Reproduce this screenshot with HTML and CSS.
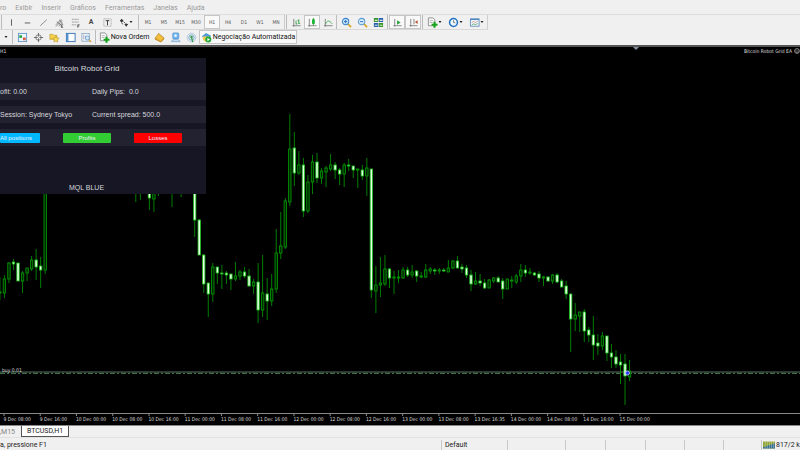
FILE: index.html
```html
<!DOCTYPE html>
<html lang="pt">
<head>
    <meta charset="utf-8">
    <title>BTCUSD,H1</title>
    <link rel="stylesheet" href="styles.css">
</head>
<body>
    <svg class="sprite" aria-hidden="true">
        <symbol id="i-vline" viewBox="0 0 12 12"><path d="M6 2.5v7" stroke="#555"/></symbol>
        <symbol id="i-hline" viewBox="0 0 12 12"><path d="M3 6.5h6" stroke="#555"/></symbol>
        <symbol id="i-trend" viewBox="0 0 12 12"><path d="M2.5 9.5l7-6.500" stroke="#666" stroke-width=".8"/></symbol>
        <symbol id="i-channel" viewBox="0 0 12 12"><path d="M2 8.500l6-6M2 10.500l7-7M5 10l4-4M3 5l5 4M5.500 3l4 4" stroke="#555" stroke-width=".7"/><path d="M8 8.500h2M8 10h1.500M8 11.300h2M8 8.500v3" stroke="#333" stroke-width=".7"/></symbol>
        <symbol id="i-fibo" viewBox="0 0 12 12"><path d="M2 2.500h8M2 5.500h8M2 8.500h5" stroke="#777" stroke-width=".8" stroke-dasharray="1.200 .4"/><path d="M8.500 11.500v-3h2M8.500 10h1.500" stroke="#333" stroke-width=".8"/></symbol>
        <symbol id="i-label" viewBox="0 0 12 12"><rect x="2" y="2" width="8" height="8" stroke="#888" stroke-width=".7" stroke-dasharray="1 .6"/><path d="M4 4h4M6 4v5" stroke="#333"/></symbol>
        <symbol id="i-arrows" viewBox="0 0 12 12"><path d="M2 4l2-2 2 2-2 2zM7 8l2-1 2 1-2 2.500z" fill="#333"/><path d="M4 6l1 2M6 5l2 2" stroke="#444"/></symbol>
        <symbol id="i-bars" viewBox="0 0 12 12"><path d="M3 2v8.500M1.500 9.500h9" stroke="#666" stroke-width=".8"/><path d="M5.500 4v4M8.500 2.500v5M7 4h1.500M8.500 7h1.500M5.500 7.500h1.500" stroke="#2a9a3e" stroke-width=".9"/></symbol>
        <symbol id="i-candles" viewBox="0 0 12 12"><path d="M2.500 2v8.500M1 9.500h9.500" stroke="#666" stroke-width=".8"/><path d="M7 1v8" stroke="#177b27" stroke-width=".8"/><rect x="5.500" y="2.500" width="3" height="5" fill="#19b52e"/></symbol>
        <symbol id="i-line" viewBox="0 0 12 12"><path d="M2.500 2v8.500M1 9.500h9.500" stroke="#666" stroke-width=".8"/><path d="M2.500 8C5 3 6.500 3.500 10 7.500" stroke="#35a548" stroke-width=".9"/></symbol>
        <symbol id="i-zoomin" viewBox="0 0 12 12"><path d="M7.500 7.500l3.500 3.500" stroke="#d9a92c" stroke-width="2"/><circle cx="5" cy="5" r="3.500" fill="#bfe0fa" stroke="#3d83c9" stroke-width="1.100"/><path d="M3.300 5h3.400M5 3.300v3.400" stroke="#1e66b5" stroke-width=".9"/></symbol>
        <symbol id="i-zoomout" viewBox="0 0 12 12"><path d="M7.500 7.500l3.500 3.500" stroke="#d9a92c" stroke-width="2"/><circle cx="5" cy="5" r="3.500" fill="#d3ebfb" stroke="#5c9bd3" stroke-width="1.100"/><path d="M3.300 5h3.400" stroke="#1e66b5" stroke-width=".9"/></symbol>
        <symbol id="i-tile" viewBox="0 0 12 12"><path d="M1 1h4.700v4.500H1zM6.300 6.500H11V11H6.300z" fill="#37922c"/><path d="M6.300 1H11v4.500H6.300zM1 6.500h4.700V11H1z" fill="#2c5eb8"/><path d="M2 3.700h3M7.300 3.700h3M2 9h3M7.300 9h3" stroke="#dff1c8" stroke-width="1.300"/></symbol>
        <symbol id="i-scroll" viewBox="0 0 12 12"><path d="M3 2v8.500M1.500 9.500h9" stroke="#666" stroke-width=".8"/><path d="M5.500 3.500l4 2.500-4 2.500z" fill="#28a63b"/></symbol>
        <symbol id="i-shift" viewBox="0 0 12 12"><path d="M3 2v8.500M1.500 9.500h9M6.500 2v6" stroke="#666" stroke-width=".8"/><path d="M10.500 3.500v4l-3-2z" fill="#c04f35"/></symbol>
        <symbol id="i-add" viewBox="0 0 12 12"><path d="M1.500 1h5l2 2v6.500h-7z" fill="#f7f7f7" stroke="#777" stroke-width=".8"/><path d="M3 4h3.500M3 6h3" stroke="#999" stroke-width=".7"/><path d="M8.200 5.200v6.400M5 8.400h6.500" stroke="#18a41d" stroke-width="2.300"/></symbol>
        <symbol id="i-clock" viewBox="0 0 12 12"><circle cx="6" cy="6" r="4.300" fill="#eef6ff" stroke="#2674c0" stroke-width="1.700"/><path d="M6 3.500V6l2 .500" stroke="#555" stroke-width=".8"/></symbol>
        <symbol id="i-template" viewBox="0 0 12 12"><rect x="1.500" y="2" width="9.500" height="8" fill="#f4faff" stroke="#5483b0" stroke-width=".9"/><path d="M1.500 2.700h9.500" stroke="#4c88c4" stroke-width="1.300"/><path d="M3 6l2-1 2 1 2.500-1.500" stroke="#c66" stroke-width=".7"/><path d="M3 8.500l2-1 2 .700 2.500-1" stroke="#3a9b50" stroke-width=".8"/></symbol>
        <symbol id="i-market" viewBox="0 0 12 12"><rect x="1.500" y="1.500" width="9" height="9" fill="#eef6fd" stroke="#5590c5" stroke-width=".9"/><path d="M2.500 3.500h3v3h-3z" fill="#2eaa42"/><path d="M6.500 6h3v3h-3z" fill="#dc5940"/></symbol>
        <symbol id="i-target" viewBox="0 0 12 12"><circle cx="6" cy="6" r="3" stroke="#777" stroke-width="1"/><path d="M6 1v4M6 7v4M1 6h4M7 6h4" stroke="#666"/></symbol>
        <symbol id="i-folder" viewBox="0 0 12 12"><path d="M1 2.500h3l1 1h3.500V8H1z" fill="#f6d44e" stroke="#b89122" stroke-width=".7"/><path d="M7.500 4.500l1 2 2.700.300-2 1.700.500 2.500-2.200-1.200L5.300 11l.500-2.500-2-1.700 2.700-.300z" fill="#fbdc50" stroke="#b58a1c" stroke-width=".6"/></symbol>
        <symbol id="i-terminal" viewBox="0 0 12 12"><rect x="1.500" y="1.500" width="9.500" height="9" fill="#fbfdff" stroke="#3472b5"/><path d="M3 2v8" stroke="#4c8bd0" stroke-width="1.500"/></symbol>
        <symbol id="i-tester" viewBox="0 0 12 12"><rect x="1" y="1.500" width="8" height="8.500" fill="#f2f6fa" stroke="#7d9cba" stroke-width=".8"/><path d="M3 3v5M5 4v4" stroke="#88a" stroke-width=".7"/><circle cx="7" cy="6.500" r="2.200" fill="#d7ebf8" stroke="#5a93c5" stroke-width=".8"/><path d="M8.700 8.500l2.500 2.500" stroke="#d0a132" stroke-width="1.400"/></symbol>
        <symbol id="i-book" viewBox="0 0 12 12"><path d="M1 7l4-5.500L11 6.500 7.500 10.500z" fill="#f2bd38" stroke="#ad7714" stroke-width=".7"/><path d="M1 7l6.500 3.500L11 6.500v1.500l-3.500 3.500L1 8.300z" fill="#c98a1d"/></symbol>
        <symbol id="i-user" viewBox="0 0 12 12"><rect x="3" y="1" width="6.500" height="6.500" rx="1" fill="#74b7ee" stroke="#3f86c8" stroke-width=".7"/><circle cx="6" cy="4" r="1.500" fill="#e5f4ff"/><path d="M1.500 10.500c0-3 9.500-3 9.500 0z" fill="#cbe0f1" stroke="#6b9cc8" stroke-width=".7"/></symbol>
        <symbol id="i-signal" viewBox="0 0 12 12"><circle cx="6" cy="6" r="4.700" stroke="#a4c4dd" stroke-width=".9"/><circle cx="6" cy="6" r="2.900" stroke="#6ea9cc" stroke-width="1"/><circle cx="6" cy="5.500" r="1.400" fill="#3c9b55"/><path d="M6 6l1.500 5" stroke="#3c9b55" stroke-width="1.400"/></symbol>
        <symbol id="i-auto" viewBox="0 0 12 12"><path d="M1 4.500L5.500 1 11 4l-1 2H2z" fill="#4f9bd5"/><path d="M2 5h7v3.500L5 11 2 8.500z" fill="#f0cd55"/><circle cx="8" cy="8.200" r="3.300" fill="#21a936"/><path d="M7 6.500l2.800 1.700L7 10z" fill="#fff"/></symbol>
        <symbol id="i-smile" viewBox="0 0 8 8"><circle cx="4" cy="4" r="3.200" stroke="#ddd" stroke-width=".8"/><path d="M2.300 4.600c.700 1.600 2.700 1.600 3.400 0M2.800 2.500v1M5.200 2.500v1" stroke="#ddd" stroke-width=".8"/></symbol>
        <symbol id="i-caret" viewBox="0 0 4 4"><path d="M.500 1h3L2 3z" fill="#222"/></symbol>
        <symbol id="i-net" viewBox="0 0 14 8"><rect width="14" height="8" fill="#8fa534"/><path d="M0 8V6.500L14 2v6z" fill="#356f95"/><path d="M2.500 0v8M5 0v8M7.500 0v8M10 0v8M12.500 0v8" stroke="#dfe6cc" stroke-width=".5"/></symbol>
    </svg>

    <nav class="menu">
        <button>ro</button>
        <button>Exibir</button>
        <button>Inserir</button>
        <button>Gráficos</button>
        <button>Ferramentas</button>
        <button>Janelas</button>
        <button>Ajuda</button>
    </nav>

    <div class="toolbar">
        <div class="group">
            <button aria-label="Linha vertical"><svg><use href="#i-vline"/></svg></button>
            <button aria-label="Linha horizontal"><svg><use href="#i-hline"/></svg></button>
            <button aria-label="Linha de tendência"><svg><use href="#i-trend"/></svg></button>
            <button aria-label="Canal"><svg><use href="#i-channel"/></svg></button>
            <button aria-label="Fibonacci"><svg><use href="#i-fibo"/></svg></button>
            <button class="letter">A</button>
            <button aria-label="Etiqueta"><svg><use href="#i-label"/></svg></button>
            <button class="drop" aria-label="Setas"><svg><use href="#i-arrows"/></svg><svg class="caret"><use href="#i-caret"/></svg></button>
        </div>
        <div class="group periods">
            <button>M1</button>
            <button>M5</button>
            <button>M15</button>
            <button>M30</button>
            <button class="pressed">H1</button>
            <button>H4</button>
            <button>D1</button>
            <button>W1</button>
            <button>MN</button>
        </div>
        <div class="group">
            <button aria-label="Barras"><svg><use href="#i-bars"/></svg></button>
            <button class="pressed" aria-label="Candles"><svg><use href="#i-candles"/></svg></button>
            <button aria-label="Linha"><svg><use href="#i-line"/></svg></button>
        </div>
        <div class="group thin">
            <button aria-label="Aproximar"><svg><use href="#i-zoomin"/></svg></button>
            <button aria-label="Afastar"><svg><use href="#i-zoomout"/></svg></button>
            <button aria-label="Organizar janelas"><svg><use href="#i-tile"/></svg></button>
        </div>
        <div class="group">
            <button class="pressed" aria-label="Rolagem automática"><svg><use href="#i-scroll"/></svg></button>
            <button class="pressed" aria-label="Deslocar gráfico"><svg><use href="#i-shift"/></svg></button>
        </div>
        <div class="group">
            <button class="drop" aria-label="Indicadores"><svg><use href="#i-add"/></svg><svg class="caret"><use href="#i-caret"/></svg></button>
            <button class="drop" aria-label="Períodos"><svg><use href="#i-clock"/></svg><svg class="caret"><use href="#i-caret"/></svg></button>
            <button class="drop" aria-label="Modelos"><svg><use href="#i-template"/></svg><svg class="caret"><use href="#i-caret"/></svg></button>
        </div>
    </div>

    <div class="toolbar standard">
        <button class="cut" aria-label="Perfis"><svg class="caret"><use href="#i-caret"/></svg></button>
        <div class="group">
            <button aria-label="Observação do mercado"><svg><use href="#i-market"/></svg></button>
            <button aria-label="Janela de dados"><svg><use href="#i-target"/></svg></button>
            <button aria-label="Navegador"><svg><use href="#i-folder"/></svg></button>
            <button aria-label="Terminal"><svg><use href="#i-terminal"/></svg></button>
            <button aria-label="Testador"><svg><use href="#i-tester"/></svg></button>
        </div>
        <div class="group">
            <button class="wide order"><svg><use href="#i-add"/></svg>Nova Ordem</button>
            <button aria-label="MetaEditor"><svg><use href="#i-book"/></svg></button>
            <button aria-label="Comunidade"><svg><use href="#i-user"/></svg></button>
            <button aria-label="Sinais"><svg><use href="#i-signal"/></svg></button>
            <button class="wide auto pressed"><svg><use href="#i-auto"/></svg>Negociação Automatizada</button>
        </div>
    </div>

    <main class="chart">
        <svg id="candles" class="candles"></svg>
        <span class="symbol">H1</span>
        <span class="ea">Bitcoin Robot Grid EA <svg><use href="#i-smile"/></svg></span>
        <span class="order-label">buy 0.01</span>
        <section class="panel">
            <h1>Bitcoin Robot Grid</h1>
            <div class="row"><span>ofit: 0.00</span><span>Daily Pips:&nbsp; 0.0</span></div>
            <div class="row"><span>Session: Sydney Tokyo</span><span>Current spread: 500.0</span></div>
            <div class="row actions">
                <button class="all">All positions</button>
                <button class="profits">Profits</button>
                <button class="losses">Losses</button>
            </div>
            <p>MQL BLUE</p>
        </section>
    </main>
    <svg id="axis" class="axis"></svg>

    <div class="tabs">
        <button>,M15</button>
        <button class="active">BTCUSD,H1</button>
    </div>

    <footer class="status">
        <span>a, pressione F1</span>
        <span>Default</span>
        <span></span>
        <span></span>
        <span></span>
        <span></span>
        <span></span>
        <span></span>
        <span class="traffic"><svg><use href="#i-net"/></svg>817/2 k</span>
    </footer>

    <script src="script.js"></script>
</body>
</html>
```
FILE: styles.css
```css
* {
    box-sizing: border-box;
}

body {
    display: flex;
    flex-direction: column;
    min-height: 100vh;
    margin: 0;
    background-color: #f0f0f0;
    color: #222;
    font-family: Roboto, "Open Sans", sans-serif;
    font-size: 7px;
    overflow: hidden;
}

button {
    display: flex;
    align-items: center;
    justify-content: center;
    padding: 0;
    border: 0;
    background: none;
    color: inherit;
    font: inherit;
    white-space: nowrap;
}

svg {
    fill: none;
}

.sprite {
    position: absolute;
    width: 0;
    height: 0;
}

.menu {
    display: flex;
    gap: 9px;
    height: 15px;
    padding-top: 1px;
    border-bottom: 1px solid #dcdcdc;
    color: #999;
}

/* toolbars */
.toolbar {
    display: flex;
    align-self: flex-start;
    height: 15px;
    border-right: 1px solid #cfcfcf;
    border-bottom: 1px solid #d8d8d8;
}

.group {
    display: flex;
    padding-left: 1px;
    margin-left: 1px;
    border-left: 1px solid #bbb;
}

.toolbar button {
    width: 16px;
}

.toolbar button svg {
    flex: none;
    width: 11px;
    height: 11px;
}

.toolbar button .caret {
    width: 4px;
    height: 4px;
}

.toolbar .drop {
    width: 21px;
}

.toolbar .letter {
    color: #444;
    font-weight: bold;
}

.toolbar .pressed {
    border: 1px solid #c6c6c6;
    background-color: #f9f9f9;
}

.periods {
    margin-left: 2px;
    border-right: 1px solid #ccc;
    color: #555;
    font-family: "DejaVu Sans Condensed", "DejaVu Sans", sans-serif;
    font-size: 5px;
}

.thin {
    margin-left: 0;
}

.standard {
    border-color: #eee;
}

.toolbar .cut {
    width: 11px;
}

.toolbar .wide {
    gap: 1px;
    color: #111;
}

.toolbar .order {
    width: 54px;
}

.toolbar .auto {
    width: 98px;
}

/* chart */
.chart {
    position: relative;
    flex: 1;
    min-height: 200px;
    border-top: 2px solid #555;
    background-color: #000;
    color: #ddd;
    font-family: "DejaVu Sans Condensed", "DejaVu Sans", sans-serif;
    font-size: 5px;
    line-height: 6px;
}

.candles {
    position: absolute;
    inset: 0;
    width: 100%;
    height: 100%;
}

.symbol,
.ea,
.order-label {
    position: absolute;
    top: 1px;
    left: 0;
}

.ea {
    display: flex;
    gap: 2px;
    right: 0;
    left: auto;
}

.ea svg {
    width: 6px;
    height: 6px;
}

.order-label {
    top: 320px;
    left: 2px;
}

.panel {
    position: absolute;
    top: 11px;
    left: 0;
    width: 206px;
    height: 136px;
    background-color: #161624;
    color: #d8d8dc;
    font-family: "Liberation Sans", Arial, sans-serif;
    font-size: 7px;
}

.panel h1 {
    margin: 0;
    padding-right: 32px;
    font-size: 8px;
    font-weight: normal;
    line-height: 22px;
    text-align: center;
}

.row {
    display: grid;
    grid-template-columns: 92px 1fr;
    align-items: center;
    height: 17px;
    margin: 3px 0 6px;
    background-color: #222230;
}

.row + .row {
    margin-top: 0;
}

.actions {
    grid-template-columns: 40px 48px 48px;
    column-gap: 23px;
}

.actions button {
    height: 10px;
    border-radius: 1px;
    color: #eef;
    font-size: 6px;
}

.actions .all {
    justify-content: flex-start;
    background-color: #00b8ff;
}

.profits {
    background-color: #32cd32;
}

.losses {
    background-color: #f00;
}

.panel p {
    margin: 38px 33px 0 0;
    line-height: 8px;
    text-align: center;
}

.wick {
    stroke: #008c00;
}

.up {
    fill: #002800;
    stroke: #00a000;
}

.down {
    fill: #e4ffe4;
    stroke: #18c018;
}

.axis {
    width: 100%;
    height: 13px;
    border-bottom: 1px solid #888;
    background-color: #000;
    font-family: "DejaVu Sans Condensed", "DejaVu Sans", sans-serif;
    font-size: 5px;
}

.axis text {
    fill: #ddd;
}

.axis line {
    stroke: #888;
}

/* bottom bars */
.tabs {
    display: flex;
    height: 12px;
    border-bottom: 1px solid #e2e2e2;
    color: #888;
}

.tabs button {
    width: 21px;
    padding-right: 6px;
    justify-content: flex-end;
}

.tabs .active {
    width: 48px;
    padding: 0;
    justify-content: center;
    border: 1px solid #555;
    border-top: 0;
    background-color: #fff;
    color: #222;
}

.status {
    display: grid;
    grid-template-columns: 1fr 66px 58px 40px 40px 39px 39px 38px 39px;
    height: 12px;
    padding-top: 2px;
    line-height: 10px;
    white-space: nowrap;
}

.status span + span {
    padding-left: 3px;
    border-left: 1px solid #c8c8c8;
}

.status .traffic {
    display: flex;
    align-items: center;
    gap: 1px;
    padding-left: 1px;
}

.traffic svg {
    flex: none;
    width: 12px;
    height: 8px;
}
```
FILE: script.js
```js
const NS = "http://www.w3.org/2000/svg";
const STEP = 4.53;
const TOP = 47;

// bar number, high, body top, body bottom, low, direction
const bars = [
    [0, 277, 292, 293, 300, "u"], [1, 275, 279, 293, 298, "u"], [2, 262, 263, 279, 283, "u"],
    [3, 259, 262, 264, 270, "d"], [4, 263, 263, 281, 281, "d"], [5, 271, 273, 281, 293, "u"],
    [6, 268, 268, 273, 281, "u"], [7, 256, 260, 269, 271, "u"], [8, 249, 260, 267, 280, "d"],
    [9, 257, 266, 270, 288, "d"], [10, 190, 190, 270, 274, "u"], [30, 180, 180, 185, 202, "u"],
    [31, 180, 180, 185, 200, "u"], [33, 180, 180, 198, 210, "d"], [34, 180, 180, 199, 212, "u"],
    [35, 180, 180, 185, 196, "u"], [38, 180, 180, 185, 207, "u"], [40, 180, 180, 185, 197, "u"],
    [43, 180, 180, 220, 237, "d"], [44, 219, 220, 255, 255, "d"], [45, 254, 255, 284, 293, "d"],
    [46, 283, 283, 294, 317, "d"], [47, 263, 267, 294, 302, "u"], [48, 267, 267, 273, 284, "d"],
    [49, 265, 273, 274, 289, "d"], [50, 271, 273, 275, 284, "d"], [51, 274, 274, 279, 290, "d"],
    [52, 262, 276, 279, 281, "u"], [53, 270, 272, 276, 280, "u"], [54, 267, 272, 276, 278, "d"],
    [55, 269, 276, 286, 287, "d"], [56, 279, 282, 286, 294, "u"], [57, 263, 282, 310, 323, "d"],
    [58, 255, 293, 310, 317, "u"], [59, 278, 294, 301, 320, "d"], [60, 274, 289, 301, 306, "u"],
    [61, 229, 253, 289, 293, "u"], [62, 212, 246, 253, 259, "u"], [63, 198, 201, 247, 249, "u"],
    [64, 114, 149, 202, 206, "u"], [65, 132, 148, 173, 186, "d"], [66, 151, 165, 173, 175, "u"],
    [67, 158, 165, 211, 217, "d"], [68, 175, 182, 211, 213, "u"], [69, 155, 162, 182, 194, "u"],
    [70, 153, 162, 178, 183, "d"], [71, 168, 171, 178, 184, "u"], [72, 166, 168, 172, 187, "u"],
    [73, 154, 165, 169, 171, "u"], [74, 162, 165, 170, 179, "d"], [75, 168, 170, 174, 185, "d"],
    [76, 163, 165, 174, 187, "u"], [77, 159, 165, 166, 171, "d"], [78, 166, 166, 170, 178, "d"],
    [79, 169, 169, 170, 188, "u"], [80, 165, 170, 176, 180, "d"], [81, 158, 168, 176, 196, "u"],
    [82, 169, 169, 290, 298, "d"], [83, 266, 285, 291, 313, "u"], [84, 257, 283, 285, 297, "u"],
    [85, 255, 269, 284, 286, "u"], [86, 268, 269, 278, 288, "d"], [87, 271, 277, 278, 294, "u"],
    [88, 270, 277, 278, 283, "u"], [89, 267, 270, 278, 279, "u"], [90, 267, 270, 275, 277, "d"],
    [91, 265, 272, 275, 278, "u"], [92, 270, 271, 276, 282, "d"], [93, 272, 276, 277, 278, "u"],
    [94, 264, 270, 277, 278, "u"], [95, 267, 269, 271, 274, "u"], [96, 268, 270, 271, 275, "d"],
    [97, 268, 270, 271, 274, "u"], [98, 268, 270, 271, 272, "d"], [99, 260, 268, 272, 272, "u"],
    [100, 260, 261, 268, 269, "u"], [101, 256, 261, 268, 268, "d"], [102, 264, 267, 269, 273, "d"],
    [103, 265, 268, 275, 278, "d"], [104, 270, 275, 284, 291, "d"], [105, 272, 281, 284, 285, "u"],
    [106, 274, 281, 283, 286, "d"], [107, 279, 283, 288, 289, "d"], [108, 279, 280, 288, 288, "u"],
    [109, 277, 278, 281, 283, "u"], [110, 276, 278, 282, 282, "d"], [111, 278, 281, 289, 299, "d"],
    [112, 279, 279, 289, 289, "u"], [113, 276, 280, 281, 288, "u"], [114, 274, 276, 282, 284, "u"],
    [115, 264, 270, 276, 282, "u"], [116, 265, 270, 273, 277, "d"], [117, 268, 272, 273, 275, "u"],
    [118, 272, 273, 275, 276, "d"], [119, 271, 274, 278, 282, "d"], [120, 276, 277, 278, 286, "u"],
    [121, 276, 277, 281, 282, "d"], [122, 274, 275, 281, 284, "u"], [123, 273, 275, 282, 283, "d"],
    [124, 279, 281, 287, 287, "d"], [125, 281, 286, 294, 299, "d"], [126, 294, 294, 319, 352, "d"],
    [127, 303, 315, 319, 331, "u"], [128, 312, 312, 316, 332, "u"], [129, 309, 312, 331, 342, "d"],
    [130, 327, 330, 335, 342, "d"], [131, 316, 335, 345, 360, "d"], [132, 334, 343, 346, 355, "d"],
    [133, 332, 336, 346, 350, "u"], [134, 336, 336, 353, 361, "d"], [135, 344, 353, 357, 368, "d"],
    [136, 350, 357, 364, 368, "d"], [137, 354, 362, 365, 384, "d"], [138, 354, 364, 376, 405, "d"],
    [139, 360, 371, 377, 381, "u"]
];

const times = ["9 Dec 08:00", "9 Dec 16:00", "10 Dec 00:00", "10 Dec 08:00", "10 Dec 16:00",
    "11 Dec 00:00", "11 Dec 08:00", "11 Dec 16:00", "12 Dec 00:00", "12 Dec 08:00", "12 Dec 16:00",
    "13 Dec 00:00", "13 Dec 08:00", "13 Dec 16:35", "14 Dec 00:00", "14 Dec 08:00", "14 Dec 16:00",
    "15 Dec 00:00"];

function draw(parent, tag, attrs, text) {
    const el = document.createElementNS(NS, tag);
    for (const key in attrs) el.setAttribute(key, attrs[key]);
    if (text) el.textContent = text;
    parent.appendChild(el);
}

const chart = document.getElementById("candles");

// order line and bid line
draw(chart, "line", { x1: 0, x2: "100%", y1: 372 - TOP, y2: 372 - TOP, stroke: "#5d6d66", "stroke-width": 1 });
draw(chart, "line", { x1: 0, x2: "100%", y1: 373.4 - TOP, y2: 373.4 - TOP, stroke: "#3c7044", "stroke-width": 1.2, "stroke-dasharray": "5 2 2 2" });

for (const [n, high, top, bottom, low, dir] of bars) {
    const x = n * STEP - 0.1;
    draw(chart, "line", { class: "wick", x1: x, x2: x, y1: high - TOP, y2: low - TOP, "stroke-width": 0.9 });
    draw(chart, "rect", {
        class: dir === "u" ? "up" : "down",
        x: x - 1.2, y: top - TOP, width: 2.4, height: bottom - top, "stroke-width": 0.8
    });
}

// shift marker and open order marker
draw(chart, "path", { d: "M633 0h6l-3 3z", fill: "#8490a0" });
draw(chart, "circle", { cx: 627.5, cy: 373 - TOP, r: 2, fill: "#2433ff", stroke: "#c8c8ff", "stroke-width": 0.8 });

const axis = document.getElementById("axis");
draw(axis, "line", { x1: 0, x2: "100%", y1: 0.5, y2: 0.5 });
times.forEach((time, i) => {
    const x = 4 + i * STEP * 8;
    draw(axis, "line", { x1: x, x2: x, y1: 0, y2: 3 });
    draw(axis, "text", { x: x - 0.5, y: 8 }, time);
});
```
